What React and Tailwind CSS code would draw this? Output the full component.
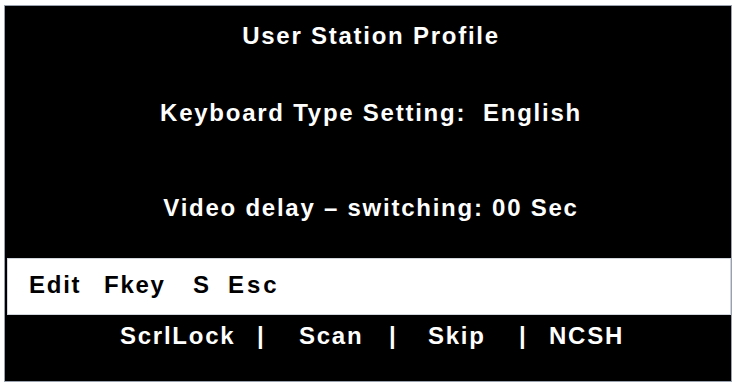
export default function App() {
  return (
    <div className="w-[734px] h-[384px] bg-white pt-[5px] pl-[4px]" style={{ fontFamily: '"Liberation Sans", Arial, sans-serif' }}>
      <div className="w-[728px] h-[377px] bg-black border border-gray-400 flex flex-col font-bold text-white text-[24px] leading-[24px] tracking-[1.75px]">
        <div className="h-[252px] flex flex-col items-center pl-[6px]">
          <div className="mt-[18px]">User Station Profile</div>
          <div className="mt-[53px] whitespace-pre">Keyboard Type Setting:  English</div>
          <div className="mt-[71px]">Video delay – switching: 00 Sec</div>
        </div>
        <div className="ml-[2px] h-[57px] bg-white border border-gray-300 text-black flex items-start pt-[14px] pl-[21px]">
          <span className="w-[75px]">Edit</span>
          <span className="w-[89px]">Fkey</span>
          <span className="w-[35px]">S</span>
          <span className="tracking-[3px]">Esc</span>
        </div>
        <div className="flex-1 flex items-start pt-[9px] pl-[115px]">
          <span className="w-[137px]">ScrlLock</span>
          <span className="w-[42px]">|</span>
          <span className="w-[90px]">Scan</span>
          <span className="w-[39px]">|</span>
          <span className="w-[91px]">Skip</span>
          <span className="w-[30px]">|</span>
          <span>NCSH</span>
        </div>
      </div>
    </div>
  )
}
